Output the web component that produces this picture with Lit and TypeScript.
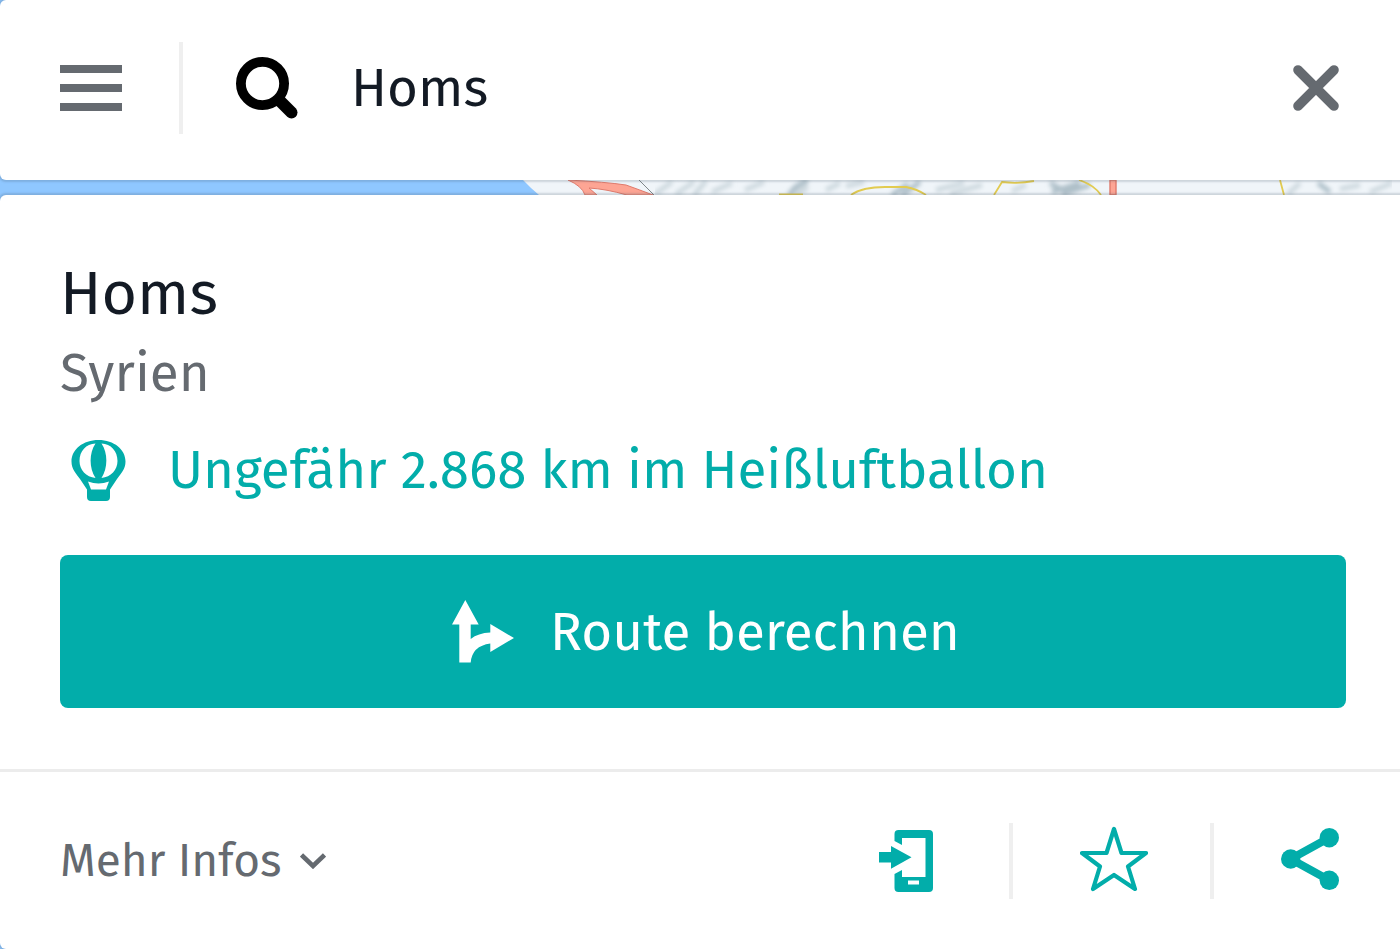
import { LitElement, css, html, svg } from "lit";
import { customElement, state } from "lit/decorators.js";

const menuIcon = svg`<svg width="62" height="46" viewBox="0 0 62 46" fill="currentColor" aria-hidden="true">
  <path d="M0 0h62v8H0zM0 19h62v8H0zM0 38h62v8H0z"/></svg>`;

const searchIcon = svg`<svg width="62" height="62" viewBox="0 0 62 62" fill="none" stroke="currentColor" aria-hidden="true">
  <circle cx="26.5" cy="26.5" r="21.6" stroke-width="9.8"/>
  <path d="M44 44 55.5 55.5" stroke-width="12" stroke-linecap="round"/></svg>`;

const closeIcon = svg`<svg width="46" height="46" viewBox="0 0 46 46" fill="none" stroke="currentColor" stroke-width="9.6" stroke-linecap="round" aria-hidden="true">
  <path d="M5 5 41 41M41 5 5 41"/></svg>`;

const balloonIcon = svg`<svg width="55" height="61" viewBox="0 0 55 61" fill="currentColor" fill-rule="evenodd" aria-hidden="true">
  <path d="M27.5 0C43 0 54.5 9.500 54.500 21.500C54.500 29 50 33.500 46 39L39 49.500V57Q39 61 35 61H20Q16 61 16 57V49.500L9 39C5 33.500.5 29 .5 21.500C.5 9.500 12 0 27.5 0Z
  M24.500 3.500C15 4 8.500 11 8.500 21C8.500 30 15 37 24.500 38C18 28 18 13 24.500 3.500Z
  M30.500 3.500C40 4 46.500 11 46.500 21C46.500 30 40 37 30.500 38C37 28 37 13 30.500 3.500Z
  M17 41.500Q27.5 45.500 38 41.500L35 49.500H20Z"/></svg>`;

const routeIcon = svg`<svg width="62" height="63" viewBox="0 0 62 63" fill="currentColor" aria-hidden="true">
  <path d="M13.300 0 26.700 24.500H18.700V39Q26 33 38.300 32.500V24L62 38 38.300 52V43.500Q20 46 18.700 62.500H7.300V24.500H0Z"/></svg>`;

const phoneIcon = svg`<svg width="54" height="62" viewBox="0 0 54 62" fill="currentColor" fill-rule="evenodd" aria-hidden="true">
  <path d="M15.500 11V4Q15.500 0 19.500 0H50Q54 0 54 4V58Q54 62 50 62H19.500Q15.500 62 15.500 58V44L23 40V47H46.500V8H23V15ZM29 50.500V54.500H40V50.500Z"/>
  <path d="M0 22H12V16L32.500 27.300 12 38.700V32.500H0Z"/></svg>`;

const starIcon = svg`<svg width="68" height="70" viewBox="0 0 68 70" fill="none" stroke="currentColor" stroke-width="4.200" stroke-linejoin="round" aria-hidden="true">
  <path d="M34 3 41.500 27H66L48 40.500 55 63 34 49 13 63 20 40.500 2 27H26.500Z"/></svg>`;

const shareIcon = svg`<svg width="58" height="66" viewBox="0 0 58 66" fill="currentColor" aria-hidden="true">
  <path d="M48.300 9.700 9.700 31 48.300 52.300" fill="none" stroke="currentColor" stroke-width="8"/>
  <circle cx="9.700" cy="31" r="9.700"/><circle cx="48.300" cy="9.700" r="9.700"/><circle cx="48.300" cy="52.300" r="9.700"/></svg>`;

const chevronIcon = svg`<svg width="26" height="16" viewBox="0 0 26 16" fill="none" stroke="currentColor" stroke-width="4.600" aria-hidden="true">
  <path d="M1.500 2 13 13 24.500 2"/></svg>`;

const mapStrip = svg`<svg class="map" viewBox="0 0 1400 15" preserveAspectRatio="xMinYMin slice" aria-hidden="true">
  <defs><filter id="relief" x="0" y="-1" width="1" height="3"><feGaussianBlur stdDeviation="2"/></filter></defs>
  <path fill="#f0f5f9" d="M0 0H1400V15H0Z"/>
  <path fill="#8fc7ff" d="M0 0H523L531 8 539 15H0Z"/>
  <g fill="none" stroke="#ced9df" stroke-width="5" filter="url(#relief)">
    <path d="M655 14 672 2M676 14 694 2M694 15 706 1M712 12 732 3M745 10 764 2M788 14 804 4M796 15 808 7M826 10 840 3M846 6 864 2M936 10 964 3M950 14 982 5M1012 11 1026 5M1288 14 1300 3M1340 9 1360 5M1370 12 1392 3"/>
    <path stroke="#afc0c9" d="M790 15Q794 5 808 1M892 15 908 4M902 15 920 2M1050 3 1066 12M1052 12 1080 3M1062 14 1090 5M1318 3 1330 12"/>
  </g>
  <path fill="#fda594" stroke="#e07b6c" d="M568 0Q606 2 626 5Q640 10 653 15H627Q606 9 589 8L597 15H585Q582 6 568 0Z"/>
  <path fill="none" stroke="#80878a" d="M639 0 654 15"/>
  <path fill="none" stroke="#e2cb50" stroke-width="1.800" d="M779 14.500H803M851 15Q862 7 885 7H906Q917 9 926 15M994 15 1002 2Q1018 4 1034 1M1079 0Q1094 5 1101 15M1280 0 1284 15"/>
  <path fill="#fda594" stroke="#e07b6c" stroke-width="1.400" d="M1110 0V15H1116V0Z"/></svg>`;

@customElement("app-root")
export class AppRoot extends LitElement {
  static styles = css`
    :host {
      display: flex;
      flex-direction: column;
      min-height: 100vh;
      background: #8fc7ff;
      color: #131a24;
      font-family: "Fira Sans", "Noto Sans", sans-serif;
    }
    * {
      box-sizing: border-box;
    }
    svg {
      display: block;
      flex: none;
    }
    button,
    input {
      margin: 0;
      padding: 0;
      border: 0;
      background: none;
      color: inherit;
      font: inherit;
    }
    button {
      cursor: pointer;
    }
    .card {
      background: #fff;
      border-radius: 6px 0 0 6px;
      box-shadow: 0 0 2px 2px rgba(60, 80, 100, 0.2);
      position: relative;
    }
    .search {
      display: flex;
      align-items: center;
      height: 180px;
      padding: 0 61px 4px 60px;
    }
    .rule {
      width: 4px;
      height: 92px;
      background: #efefef;
    }
    .menu,
    .clear {
      color: #656a70;
    }
    .menu {
      margin-right: 57px;
    }
    .find {
      margin: 0 53px;
      color: #000;
    }
    .query {
      flex: 1;
      min-width: 0;
      height: 72px;
      font-size: 53px;
      outline: 0;
    }
    .map {
      width: 100%;
      height: 15px;
    }
    .place {
      flex: 1;
      display: flex;
      flex-direction: column;
    }
    .details {
      padding: 61px 54px 61px 60px;
      border-bottom: 3px solid #ececec;
    }
    .title {
      margin: 0;
      font-size: 61px;
      line-height: 76px;
      font-weight: 400;
    }
    .region {
      margin: 0;
      color: #656a70;
      font-size: 53px;
      line-height: 82px;
    }
    .distance {
      display: flex;
      align-items: center;
      gap: 42px;
      margin: 0 0 35px;
      padding: 6px 0 0 11px;
      color: #02adaa;
      font-size: 53px;
      line-height: 100px;
    }
    .route {
      display: flex;
      align-items: center;
      justify-content: center;
      gap: 36px;
      width: 100%;
      height: 153px;
      padding-left: 6px;
      border-radius: 8px;
      background: #02adaa;
      color: #fff;
      font-size: 53px;
    }
    .actions {
      flex: 1;
      display: flex;
      align-items: center;
      padding: 0 61px 0 60px;
      color: #02adaa;
    }
    .more {
      display: flex;
      align-items: center;
      gap: 18px;
      margin-right: auto;
      color: #656a70;
      font-size: 46px;
    }
    .send {
      margin-right: 14px;
    }
    .actions .rule {
      height: 76px;
      margin: 0 67px 0 62px;
    }
  `;

  @state() private query = "Homs";

  private onInput(event: Event) {
    this.query = (event.target as HTMLInputElement).value;
  }

  render() {
    return html`
      <header class="card search">
        <button class="menu" aria-label="Menü">${menuIcon}</button>
        <span class="rule"></span>
        <button class="find" aria-label="Suchen">${searchIcon}</button>
        <input class="query" type="text" aria-label="Suche" .value=${this.query} @input=${this.onInput} />
        <button class="clear" aria-label="Löschen" @click=${() => (this.query = "")}>${closeIcon}</button>
      </header>
      ${mapStrip}
      <main class="card place">
        <section class="details">
          <h1 class="title">Homs</h1>
          <p class="region">Syrien</p>
          <p class="distance">${balloonIcon}<span>Ungefähr 2.868 km im Heißluftballon</span></p>
          <button class="route">${routeIcon}<span>Route berechnen</span></button>
        </section>
        <footer class="actions">
          <button class="more"><span>Mehr Infos</span>${chevronIcon}</button>
          <button class="send" aria-label="An Smartphone senden">${phoneIcon}</button>
          <span class="rule"></span>
          <button aria-label="Merken">${starIcon}</button>
          <span class="rule"></span>
          <button aria-label="Teilen">${shareIcon}</button>
        </footer>
      </main>
    `;
  }
}
